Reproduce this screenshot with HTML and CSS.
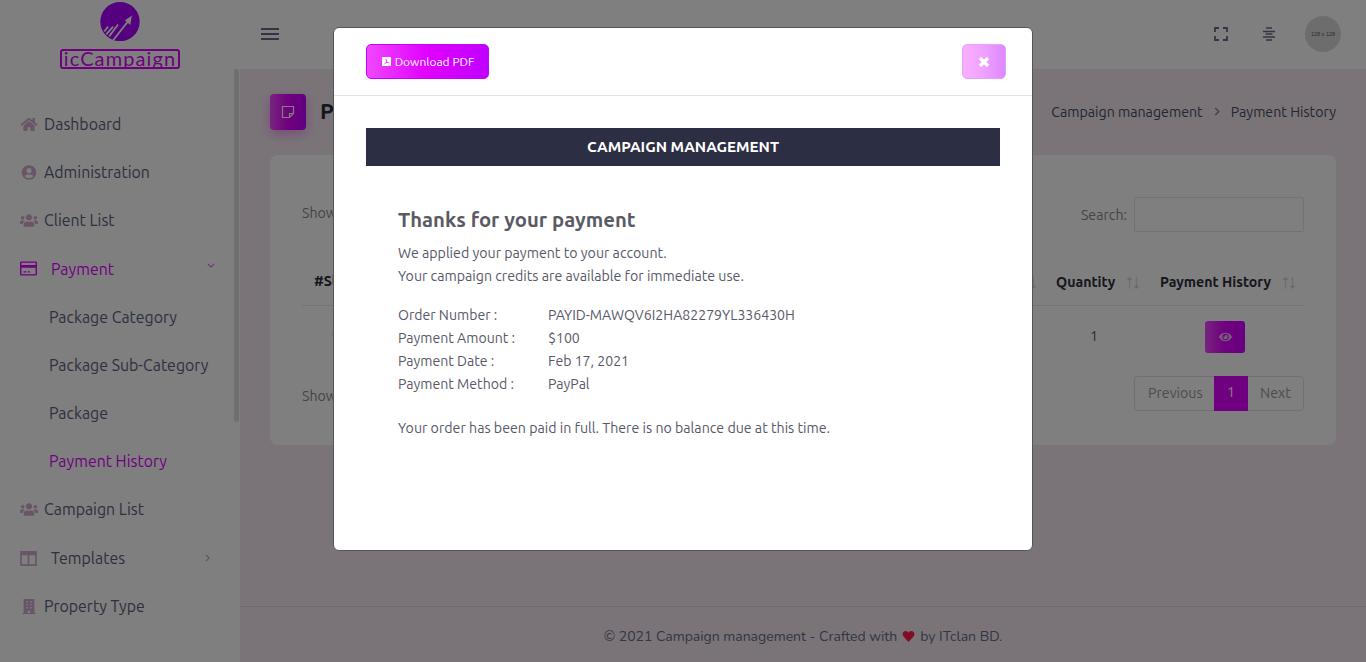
FILE: index.html
```html
<!DOCTYPE html>
<html lang="en">
<head>
<meta charset="utf-8">
<title>Payment History</title>
<link rel="stylesheet" href="styles.css">
</head>
<body>
<div class="app">
  <aside class="sidebar">
    <div class="logo">
      <svg class="logo-mark" viewBox="0 0 40 40"><circle cx="20" cy="20" r="20" fill="#aa00ff"/><g stroke="#fff" stroke-width="1.800" fill="none"><path d="M4 30l4-5M6 33l7-8M9 35l9-12M13 39l15-19"/></g><path d="M32 14l-1.500 9.500-5.500-5z" fill="#fff"/></svg>
      <div class="logo-text">icCampaign</div>
    </div>
    <nav class="menu">
      <a class="item"><svg class="ic" viewBox="0 0 576 512"><path d="M280 148L96 300v164c0 9 7 16 16 16l112-.3c9 0 16-7 16-16V368c0-9 7-16 16-16h64c9 0 16 7 16 16v96c0 9 7 16 16 16l112 .3c9 0 16-7 16-16V300L296 148c-4-3-12-3-16 0zM572 251l-84-69V44c0-7-5-12-12-12h-56c-7 0-12 5-12 12v72l-89-74c-18-14-43-14-61 0L4 251c-5 4-6 12-2 17l26 31c4 5 12 6 17 2L280 107c4-3 12-3 16 0l235 194c5 4 13 3 17-2l26-31c4-5 3-13-2-17z"/></svg><span>Dashboard</span></a>
      <a class="item"><svg class="ic" viewBox="0 0 496 512"><path d="M248 8C111 8 0 119 0 256s111 248 248 248 248-111 248-248S385 8 248 8zm0 96c49 0 88 39 88 88s-39 88-88 88-88-39-88-88 39-88 88-88zm0 344c-59 0-111-27-146-68 19-35 55-60 98-60 2 0 5 0 7 1 13 4 27 7 41 7s28-3 41-7c2-1 5-1 7-1 43 0 79 25 98 60-35 41-87 68-146 68z"/></svg><span>Administration</span></a>
      <a class="item"><svg class="ic" viewBox="0 0 640 512"><path d="M96 224c35 0 64-29 64-64s-29-64-64-64-64 29-64 64 29 64 64 64zm448 0c35 0 64-29 64-64s-29-64-64-64-64 29-64 64 29 64 64 64zm32 32h-64c-18 0-34 7-45 19 40 22 69 62 75 109h66c18 0 32-14 32-32v-32c0-35-29-64-64-64zm-256 0c62 0 112-50 112-112S382 32 320 32 208 82 208 144s50 112 112 112zm77 32h-8c-21 10-44 16-69 16s-48-6-69-16h-8c-64 0-115 52-115 115v29c0 26 21 48 48 48h288c26 0 48-22 48-48v-29c0-63-52-115-115-115zM173 275c-12-12-28-19-45-19H64c-35 0-64 29-64 64v32c0 18 14 32 32 32h66c6-47 35-87 75-109z"/></svg><span>Client List</span></a>
      <a class="item active sub-head"><svg class="ic ic-wide" viewBox="0 0 24 20"><path d="M2 0h20a2 2 0 0 1 2 2v16a2 2 0 0 1-2 2H2a2 2 0 0 1-2-2V2a2 2 0 0 1 2-2zm0 2v3h20V2zm0 7v9h20V9zm3 5h4v1.500H5zm6 0h3v1.500h-3z" fill-rule="evenodd"/></svg><span>Payment</span><svg class="chev chev-down" viewBox="0 0 10 6"><path d="M1 1l4 4 4-4" fill="none" stroke="currentColor" stroke-width="1.300"/></svg></a>
      <a class="subitem">Package Category</a>
      <a class="subitem">Package Sub-Category</a>
      <a class="subitem">Package</a>
      <a class="subitem active">Payment History</a>
      <a class="item"><svg class="ic" viewBox="0 0 640 512"><path d="M96 224c35 0 64-29 64-64s-29-64-64-64-64 29-64 64 29 64 64 64zm448 0c35 0 64-29 64-64s-29-64-64-64-64 29-64 64 29 64 64 64zm32 32h-64c-18 0-34 7-45 19 40 22 69 62 75 109h66c18 0 32-14 32-32v-32c0-35-29-64-64-64zm-256 0c62 0 112-50 112-112S382 32 320 32 208 82 208 144s50 112 112 112zm77 32h-8c-21 10-44 16-69 16s-48-6-69-16h-8c-64 0-115 52-115 115v29c0 26 21 48 48 48h288c26 0 48-22 48-48v-29c0-63-52-115-115-115zM173 275c-12-12-28-19-45-19H64c-35 0-64 29-64 64v32c0 18 14 32 32 32h66c6-47 35-87 75-109z"/></svg><span>Campaign List</span></a>
      <a class="item sub-head tmpl"><svg class="ic ic-wide" viewBox="0 0 20 18"><path d="M1 0h18a1 1 0 0 1 1 1v16a1 1 0 0 1-1 1H1a1 1 0 0 1-1-1V1a1 1 0 0 1 1-1zm1 5v11h7V5zm9 0v11h7V5z" fill-rule="evenodd"/></svg><span>Templates</span><svg class="chev chev-right" viewBox="0 0 6 10"><path d="M1 1l4 4-4 4" fill="none" stroke="currentColor" stroke-width="1.300"/></svg></a>
      <a class="item"><svg class="ic" viewBox="0 0 448 512"><path d="M40 0h368v480h40v32H0v-32h40zm96 80v48h48V80zm128 0v48h48V80zM136 176v48h48v-48zm128 0v48h48v-48zM136 272v48h48v-48zm128 0v48h48v-48zM184 400v80h80v-80z" fill-rule="evenodd"/></svg><span>Property Type</span></a>
    </nav>
    <div class="scrollbar"></div>
  </aside>
  <div class="main">
    <header class="topbar">
      <svg class="burger" viewBox="0 0 18 12"><path d="M0 1h18M0 6h18M0 11h18" stroke="#676a8a" stroke-width="1.800"/></svg>
      <div class="top-actions">
        <svg class="top-ic" viewBox="0 0 14 14"><path d="M1 5V1h4M9 1h4v4M13 9v4H9M5 13H1V9" fill="none" stroke="#676a8a" stroke-width="1.800"/></svg>
        <svg class="top-ic" viewBox="0 0 14 14"><path d="M4 1h6M1 4.500h12M3.500 7h7M1 10h12M4 13h6" stroke="#676a8a" stroke-width="1.300"/></svg>
        <div class="avatar">128 x 128</div>
      </div>
    </header>
    <section class="content">
      <div class="page-head">
        <div class="title-wrap">
          <div class="title-ic"><svg viewBox="0 0 14 14"><path d="M1.500 1.500h11v7l-4 4h-7zM12.500 8.500h-4v4" fill="none" stroke="#fff" stroke-width="1.200"/></svg></div>
          <h1>P</h1>
        </div>
        <div class="crumbs"><span>Campaign management</span><svg class="crumb-sep" viewBox="0 0 6 10"><path d="M1 1l4 4-4 4" fill="none" stroke="currentColor" stroke-width="1.600"/></svg><span>Payment History</span></div>
      </div>
      <div class="card">
        <div class="tools">
          <div class="show">Show</div>
          <label class="search">Search: <span class="input"></span></label>
        </div>
        <div class="row head">
          <div>#Sl</div><div></div><div class="prev-sort"><i>↑↓</i></div><div class="q">Quantity<i>↑↓</i></div><div class="h">Payment History<i>↑↓</i></div>
        </div>
        <div class="row body-row">
          <div class="sl">1</div><div></div><div></div><div class="q1">1</div>
          <div class="h1"><span class="eye"><svg viewBox="0 0 576 512"><path d="M572 241C518 136 410 64 288 64S58 136 4 241a32 32 0 0 0 0 30C58 376 166 448 288 448s230-72 284-177a32 32 0 0 0 0-30zM288 400a144 144 0 1 1 144-144 144 144 0 0 1-144 144zm0-240a95 95 0 0 0-25 4 48 48 0 0 1-67 67 96 96 0 1 0 92-71z"/></svg></span></div>
        </div>
        <div class="tools foot">
          <div class="show">Show</div>
          <div class="pager"><span class="prev">Previous</span><b>1</b><span class="next">Next</span></div>
        </div>
      </div>
    </section>
    <footer class="footer"><span>© 2021 Campaign management - Crafted with</span><svg class="heart" viewBox="0 0 24 22"><path d="M12 22L2 11C-2 6 1 0 6.500 0 9 0 11 1.500 12 3.500 13 1.500 15 0 17.500 0 23 0 26 6 22 11z"/></svg><span>by ITclan BD.</span></footer>
  </div>
</div>
<div class="overlay">
  <div class="modal">
    <div class="modal-head">
      <button class="btn-pdf"><svg viewBox="0 0 14 14"><path d="M1 0h12a1 1 0 0 1 1 1v12a1 1 0 0 1-1 1H1a1 1 0 0 1-1-1V1a1 1 0 0 1 1-1zm5 3c-1 1 0 3 .500 4-.5 1.500-1.500 3-3 3.500l.5 1c1.500-1 2-1.500 3-2 1.500-.5 2.500-.5 3.500-.3l.5-1C9.500 8 8.500 7.500 7.500 6.500 7.500 5 7.500 3.500 6 3z" fill="#fff" fill-rule="evenodd"/></svg>Download PDF</button>
      <button class="btn-close"><svg viewBox="0 0 12 12"><path d="M2 2l8 8M10 2l-8 8" stroke="#fff" stroke-width="3.200"/></svg></button>
    </div>
    <div class="modal-body">
      <div class="banner">CAMPAIGN MANAGEMENT</div>
      <div class="receipt">
        <h2>Thanks for your payment</h2>
        <p>We applied your payment to your account.<br>Your campaign credits are available for immediate use.</p>
        <dl>
          <dt>Order Number :</dt><dd>PAYID-MAWQV6I2HA82279YL336430H</dd>
          <dt>Payment Amount :</dt><dd>$100</dd>
          <dt>Payment Date :</dt><dd>Feb 17, 2021</dd>
          <dt>Payment Method :</dt><dd>PayPal</dd>
        </dl>
        <p class="last">Your order has been paid in full. There is no balance due at this time.</p>
      </div>
    </div>
  </div>
</div>
</body>
</html>
```
FILE: styles.css
```css
* { box-sizing: border-box; }
html, body { margin: 0; height: 100%; overflow: hidden; }
body { font-family: "Ubuntu", "Noto Sans", sans-serif; font-size: 14.2px; color: #676a8a; background: #f4e9f0; }
.app { display: flex; height: 662px; }

.sidebar { width: 240px; flex: none; background: #fff; position: relative; }
.logo { height: 69px; display: flex; flex-direction: column; align-items: center; padding-top: 2px; }
.logo-mark { width: 40px; height: 40px; display: block; }
.logo-text { width: 120px; height: 20px; margin-top: 8px; border: 2px solid #e000ff; border-radius: 3px; color: #e000ff; font: 20px/15px "Lato", sans-serif; text-align: center; letter-spacing: 1.100px; white-space: nowrap; }
.menu { display: flex; flex-direction: column; padding: 31px 0 0 20px; }
.item, .subitem { height: 48px; display: flex; align-items: center; font-size: 15.900px; color: #5e5e80; }
.item span { margin-left: 6px; }
.item .ic { width: 18px; height: 15px; fill: #d0aacc; flex: none; }
.item .ic-wide { width: 17px; height: 15px; }
.sub-head { position: relative; height: 49px; }
.sub-head span { margin-left: 14px; }
.tmpl { padding-top: 1px; }
.item.active, .subitem.active { color: #e000ff; }
.item.active .ic { fill: #e000ff; }
.subitem { padding-left: 29px; }
.chev { position: absolute; color: #b69ac8; }
.chev-down { width: 8px; height: 5px; left: 187px; top: 19px; color: #d060f0; }
.chev-right { width: 5px; height: 8px; left: 185px; top: 21px; }
.scrollbar { position: absolute; right: 1px; top: 69px; width: 5px; height: 353px; background: #dedede; border-radius: 3px; }

.main { flex: 1; display: flex; flex-direction: column; min-width: 0; }
.topbar { height: 69px; flex: none; background: #fff; display: flex; align-items: center; justify-content: space-between; padding: 0 25px 1px 21px; }
.burger { width: 18px; height: 12px; }
.top-actions { display: flex; align-items: center; }
.top-ic { width: 14px; height: 14px; margin-right: 34px; }
.top-ic + .top-ic { margin-right: 29px; }
.avatar { width: 36px; height: 36px; border-radius: 50%; background: #dbdbdb; color: #5b5b5b; font: 5.500px/36px "Liberation Sans", sans-serif; text-align: center; }

.content { flex: 1; padding: 25px 30px 0; }
.page-head { display: flex; justify-content: space-between; align-items: center; height: 36px; }
.title-wrap { display: flex; align-items: center; gap: 14px; }
.title-ic { width: 36px; height: 36px; border-radius: 4px; background: linear-gradient(90deg, #f048ff, #e000ff 50%, #c000ff); box-shadow: 0 4px 12px rgba(224,0,255,.35); display: flex; align-items: center; justify-content: center; }
.title-ic svg { width: 14px; height: 14px; }
h1 { margin: 0 0 3px; font-size: 22px; font-weight: 700; color: #2a2a3c; }
.crumbs { display: flex; align-items: center; gap: 11px; color: #4a4a66; font-size: 14.200px; margin-top: -1px; }
.crumb-sep { width: 6px; height: 9px; color: #888; }
.card { margin-top: 25px; height: 290px; background: #fff; border-radius: 8px; padding: 42px 32px 0; }
.tools { display: flex; justify-content: space-between; align-items: center; height: 35px; color: #888; }
.tools > .show { padding-bottom: 4px; }
.tools.foot > .show { padding: 5px 0 0; }
.search { display: flex; align-items: center; gap: 7px; }
.input { width: 170px; height: 35px; border: 1px solid #e6e6e6; border-radius: 2px; display: block; }
.row { display: grid; grid-template-columns: 60px 400px 282px 104px 156px; }
.row.head { margin-top: 33px; height: 41px; align-items: center; border-bottom: 1px solid #e8e8e8; font-weight: 700; color: #2c2c3a; padding-bottom: 8px; }
.row.head > div:first-child { padding-left: 12px; }
.q, .h { padding-left: 12px; white-space: nowrap; }
.prev-sort { text-align: right; padding-right: 9px; }
.row.head i { font-style: normal; font-weight: 400; color: #cfcfcf; margin-left: 9px; letter-spacing: -3px; font-size: 20px; line-height: 16px; vertical-align: -1px; }
.body-row { height: 62px; align-items: center; color: #777; padding-bottom: 1px; }
.sl { text-align: center; padding-left: 6px; }
.q1 { text-align: center; padding: 0 4px 2px 0; color: #555; }
.h1 { display: flex; justify-content: center; padding-right: 2px; }
.eye { width: 40px; height: 32px; border-radius: 3px; background: linear-gradient(90deg, #f048ff, #e000ff 50%, #d000ff); display: flex; align-items: center; justify-content: center; }
.eye svg { width: 13px; height: 12px; fill: #eec0f8; }
.foot { margin-top: 8px; }
.pager { display: flex; height: 35px; width: 170px; border: 1px solid #e0dfe2; border-radius: 4px; color: #999; align-items: center; }
.pager .prev { width: 79px; padding: 0 0 2px 13px; }
.pager .next { flex: 1; padding: 0 0 2px 12px; }
.pager b { width: 34px; height: 35px; background: #df00ff; color: #fff; font-weight: 400; text-align: center; line-height: 33px; flex: none; }
.footer { height: 56px; flex: none; border-top: 1px solid #ddd3d9; display: flex; align-items: center; justify-content: center; gap: 4px; font-family: "Nunito", "Lato", sans-serif; font-size: 14px; color: #6a6a8c; padding-top: 4px; white-space: nowrap; }
.heart { width: 13px; height: 11px; fill: #ff1a50; margin: 0 1px; }

.overlay { position: fixed; inset: 0; background: rgba(0,0,0,.5); }
.modal { width: 700px; height: 524px; margin: 27px 0 0 333px; background: #fff; border: 1px solid #555; border-radius: 6px; color: #585868; }
.modal-head { height: 68px; border-bottom: 1px solid #e2e2e2; padding: 16px 26px 0 32px; display: flex; justify-content: space-between; align-items: flex-start; }
.modal-head button { height: 35px; border-radius: 5px; border: 1px solid #c800ff; color: #fff; font-family: inherit; }
.btn-pdf { width: 123px; display: flex; align-items: center; justify-content: center; gap: 4px; font-size: 12px; background: linear-gradient(90deg, #f048ff, #e000ff 50%, #c000ff); padding: 0 0 0 1px; }
.btn-pdf svg { width: 9px; height: 9px; }
.modal-head .btn-close { width: 44px; background: linear-gradient(90deg, #f8b0ff, #f0a0ff 50%, #dd88ff); border-color: #e8a0ff; padding: 0; display: flex; align-items: center; justify-content: center; }
.btn-close svg { width: 12px; height: 12px; }
.modal-body { padding: 32px 32px 0; }
.banner { height: 38px; background: #2c2e43; color: #fff; font-size: 15.200px; font-weight: 700; text-align: center; line-height: 38px; }
.receipt { padding: 42px 32px 0; }
h2 { margin: 0; font-size: 20.300px; line-height: 24px; color: #5a5a64; font-weight: 700; }
.receipt p { margin: 10px 0 0; line-height: 23px; }
dl { margin: 16px 0 0; display: grid; grid-template-columns: 150px 1fr; line-height: 23px; font-size: 14.100px; }
dt, dd { margin: 0; }
.receipt p.last { margin-top: 21px; }
```
